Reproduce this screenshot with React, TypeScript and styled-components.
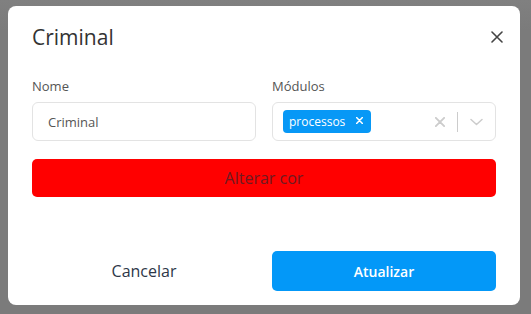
import React from 'react'
import styled, { createGlobalStyle } from 'styled-components'

const GlobalStyle = createGlobalStyle`
  html, body {
    margin: 0;
    padding: 0;
    background: #7b7b7b;
    font-family: 'Open Sans', 'Noto Sans', sans-serif;
  }
`

const CloseIcon = ({ size = 12, color = '#444', stroke = 1.6 }: { size?: number; color?: string; stroke?: number }) => (
  <svg width={size} height={size} viewBox='0 0 12 12' fill='none'>
    <path d='M1 1L11 11M11 1L1 11' stroke={color} strokeWidth={stroke} strokeLinecap='round' />
  </svg>
)

const Chevron = () => (
  <svg width='13' height='8' viewBox='0 0 13 8' fill='none'>
    <path d='M1 1.5L6.5 6.5L12 1.5' stroke='#cccccc' strokeWidth='1.5' strokeLinecap='round' strokeLinejoin='round' />
  </svg>
)

export default function App() {
  return (
    <S.Backdrop>
      <GlobalStyle />
      <S.Dialog>
        <S.Header>
          <S.Title>Criminal</S.Title>
          <S.CloseButton aria-label='Fechar'>
            <CloseIcon />
          </S.CloseButton>
        </S.Header>

        <S.Fields>
          <S.Field>
            <S.Label>Nome</S.Label>
            <S.Input defaultValue='Criminal' />
          </S.Field>
          <S.Field>
            <S.Label>Módulos</S.Label>
            <S.Select>
              <S.Values>
                <S.Chip>
                  processos
                  <S.ChipRemove>
                    <CloseIcon size={7} color='#ffffff' stroke={2.6} />
                  </S.ChipRemove>
                </S.Chip>
              </S.Values>
              <S.Indicators>
                <S.Indicator>
                  <CloseIcon size={10} color='#cccccc' stroke={2.2} />
                </S.Indicator>
                <S.Separator />
                <S.Indicator>
                  <Chevron />
                </S.Indicator>
              </S.Indicators>
            </S.Select>
          </S.Field>
        </S.Fields>

        <S.ColorButton color='#ff0000'>Alterar cor</S.ColorButton>

        <S.Footer>
          <S.GhostButton>Cancelar</S.GhostButton>
          <S.PrimaryButton>Atualizar</S.PrimaryButton>
        </S.Footer>
      </S.Dialog>
    </S.Backdrop>
  )
}

const S = {
  Backdrop: styled.div`
    width: 531px;
    height: 314px;
    box-sizing: border-box;
    padding: 6px 11px 9px 8px;
    background: linear-gradient(180deg, #808080 0px, #7b7b7b 30px);
  `,
  Dialog: styled.div`
    width: 512px;
    height: 299px;
    box-sizing: border-box;
    background: #ffffff;
    border-radius: 8px;
    padding: 18px 24px 14px;
    display: flex;
    flex-direction: column;
  `,
  Header: styled.div`
    height: 26px;
    display: flex;
    align-items: center;
    justify-content: space-between;
  `,
  Title: styled.h2`
    margin: 0;
    font-size: 21px;
    line-height: 26px;
    font-weight: 400;
    color: #333333;
  `,
  CloseButton: styled.button`
    border: none;
    background: none;
    padding: 0;
    margin-right: -7px;
    width: 12px;
    height: 12px;
    display: flex;
    cursor: pointer;
  `,
  Fields: styled.div`
    margin-top: 27px;
    display: grid;
    grid-template-columns: 1fr 1fr;
    gap: 16px;
  `,
  Field: styled.div`
    display: flex;
    flex-direction: column;
  `,
  Label: styled.label`
    font-size: 13px;
    line-height: 18px;
    color: #555555;
    margin-bottom: 7px;
  `,
  Input: styled.input`
    height: 39px;
    box-sizing: border-box;
    border: 1px solid #e3e3e3;
    border-radius: 6px;
    padding: 0 15px;
    font-family: 'Open Sans', 'Noto Sans', sans-serif;
    font-size: 13px;
    color: #555555;
    outline: none;
  `,
  Select: styled.div`
    height: 39px;
    box-sizing: border-box;
    border: 1px solid #e3e3e3;
    border-radius: 6px;
    padding: 0 0 0 10px;
    display: flex;
    align-items: center;
    justify-content: space-between;
  `,
  Values: styled.div`
    display: flex;
    align-items: center;
  `,
  Chip: styled.span`
    height: 23px;
    display: inline-flex;
    align-items: center;
    gap: 11px;
    padding: 0 8px 0 6px;
    background: #0798f6;
    color: #ffffff;
    border-radius: 4px;
    font-size: 12px;
    font-weight: 500;
  `,
  ChipRemove: styled.span`
    display: flex;
    margin-top: -3px;
  `,
  Indicators: styled.div`
    display: flex;
    align-items: center;
    height: 100%;
  `,
  Indicator: styled.span`
    display: flex;
    align-items: center;
    justify-content: center;
    padding: 0 12px;
  `,
  Separator: styled.span`
    width: 1px;
    height: 20px;
    background: #cccccc;
  `,
  ColorButton: styled.button<{ color: string }>`
    margin-top: 18px;
    height: 38px;
    border: none;
    border-radius: 5px;
    background: ${props => props.color};
    color: #6e1b22;
    font-family: 'Open Sans', 'Noto Sans', sans-serif;
    font-size: 16px;
    cursor: pointer;
  `,
  Footer: styled.div`
    margin-top: 54px;
    display: grid;
    grid-template-columns: 1fr 1fr;
    gap: 16px;
  `,
  GhostButton: styled.button`
    height: 40px;
    border: none;
    background: transparent;
    color: #2d3748;
    font-family: 'Open Sans', 'Noto Sans', sans-serif;
    font-size: 16px;
    cursor: pointer;
  `,
  PrimaryButton: styled.button`
    height: 40px;
    border: none;
    border-radius: 5px;
    background: #0398f8;
    color: #ffffff;
    font-family: 'Open Sans', 'Noto Sans', sans-serif;
    font-size: 14px;
    font-weight: 600;
    cursor: pointer;
  `
}
